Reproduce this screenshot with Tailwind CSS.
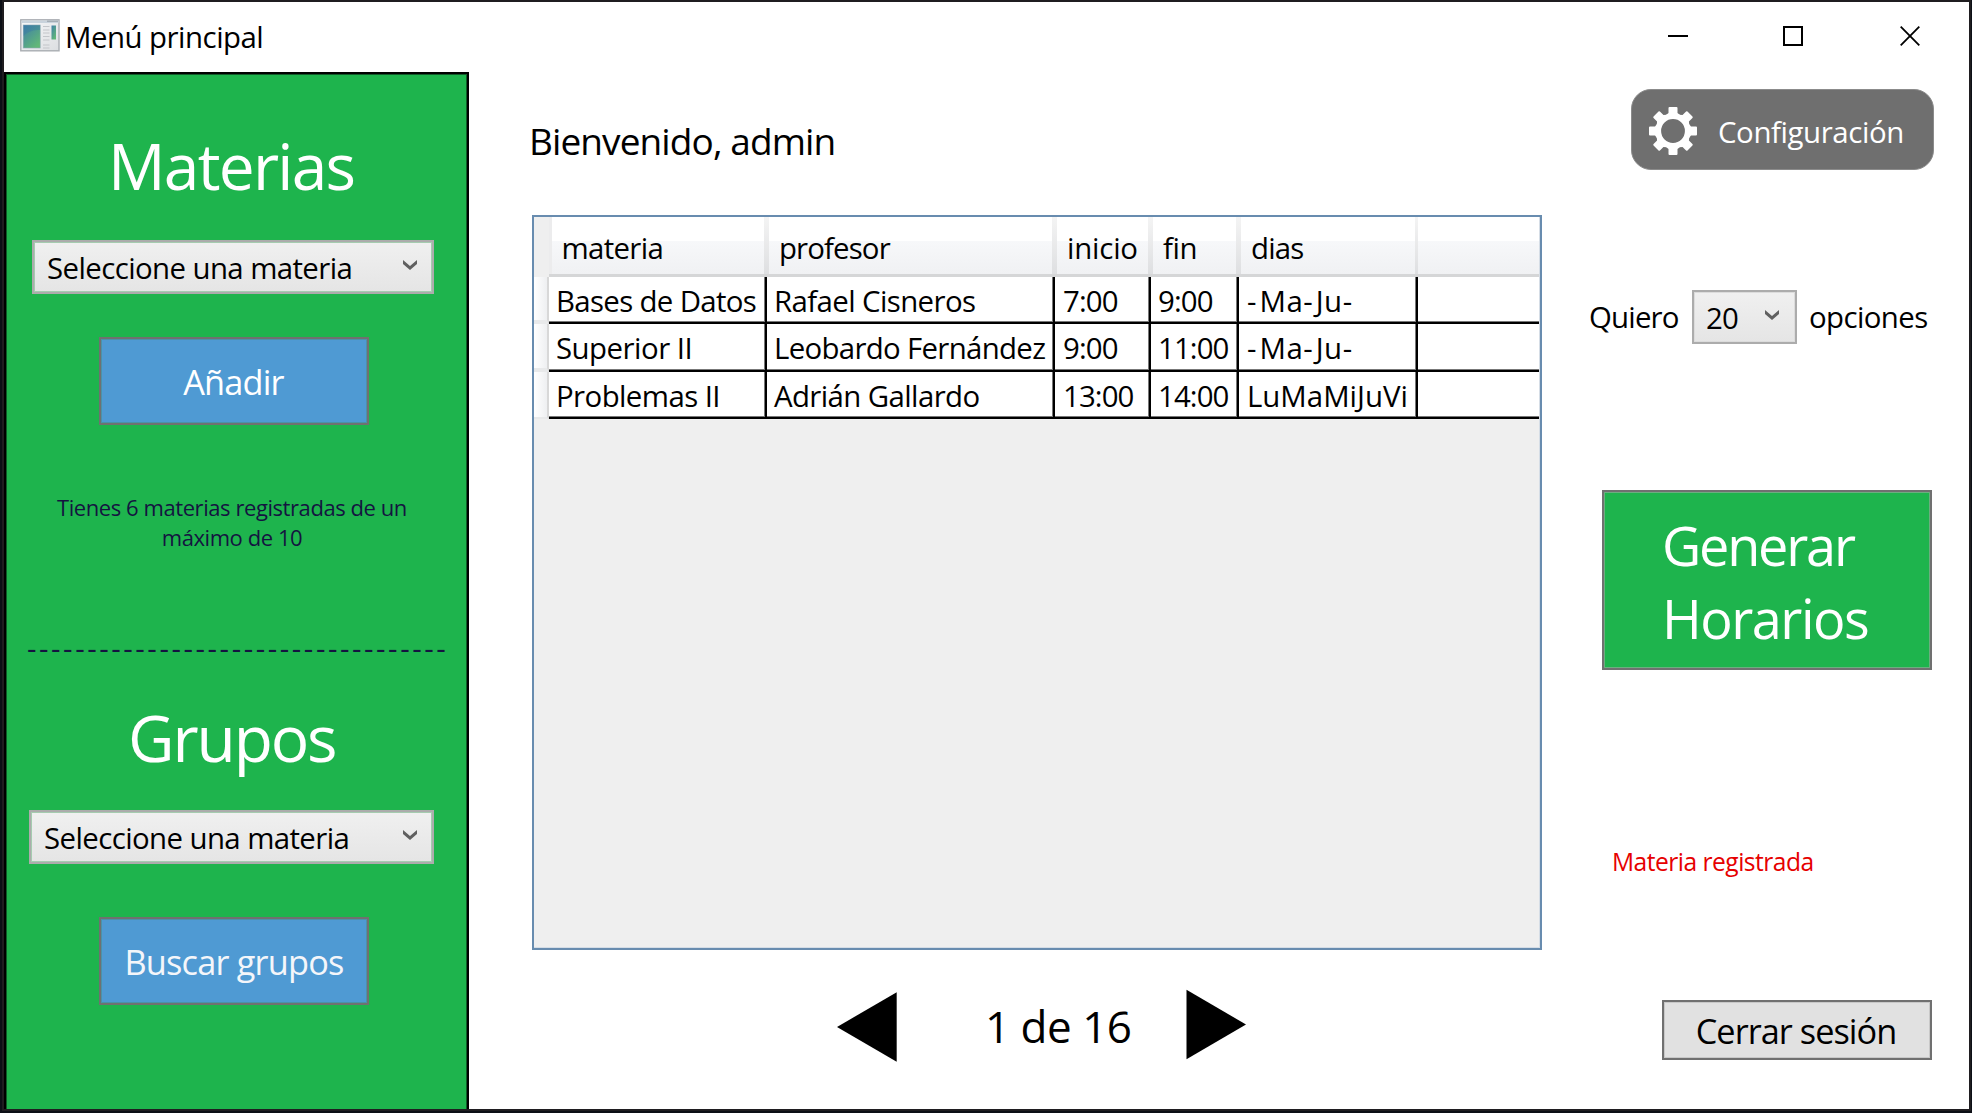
<!DOCTYPE html>
<html lang="es">
<head>
<meta charset="utf-8">
<title>Menú principal</title>
<script src="https://cdn.jsdelivr.net/npm/@tailwindcss/browser@4"></script>
</head>
<body class="w-[1972px] h-[1113px] overflow-hidden bg-[#05060f] font-['Open_Sans',sans-serif] text-[29.4px] leading-[40px] text-black whitespace-nowrap">
<div class="w-[1972px] h-[1113px] bg-[#0c0f16] pl-[2px] pr-px pb-[2px]">
<div class="w-full h-full bg-white border-2 border-[#1f1d20] flex flex-col">

  <!-- Title bar -->
  <header class="h-[70px] flex-none flex items-start">
    <svg class="ml-4 mt-[17px] flex-none" width="40" height="33" viewBox="0 0 40 33">
      <defs>
        <linearGradient id="pane" x1="0" y1="0" x2="0.7" y2="1"><stop offset="0" stop-color="#3f7fa8"/><stop offset="1" stop-color="#62b877"/></linearGradient>
        <linearGradient id="frame" x1="0" y1="0" x2="1" y2="1"><stop offset="0" stop-color="#f7f8f9"/><stop offset="1" stop-color="#dcdee1"/></linearGradient>
      </defs>
      <rect x="0.8" y="0.8" width="38.2" height="31" fill="url(#frame)" stroke="#a9adb2" stroke-width="1.4"/>
      <rect x="1.5" y="1.5" width="37" height="2.5" fill="#c9d3dc"/>
      <rect x="27" y="1.5" width="11" height="1.5" fill="#a4adb5"/>
      <rect x="3.2" y="6" width="17" height="23" fill="url(#pane)" stroke="#8fa9b5" stroke-width=".6"/>
      <path d="M3.5 17c5-5 10-6 16.500-6V6.300H3.500z" fill="#3673a8" opacity=".35"/>
      <path d="M23 7.500h6.500M23 11h6.500M23 14h6.500M23 17.500h6.500M23 21h6.500M23 26h6.500M23 29h6.500" stroke="#c3c6ca" stroke-width="1.200"/>
      <rect x="31.500" y="6.500" width="4.500" height="14" fill="url(#pane)"/>
    </svg>
    <h1 class="ml-[5px] mt-[15px] tracking-[-0.5px]">Menú principal</h1>
    <div class="ml-auto mr-[49px] mt-6 flex">
      <svg width="20" height="20" viewBox="0 0 20 20" class="mr-[95px]"><path d="M0 10h20" stroke="#000" stroke-width="2"/></svg>
      <svg width="20" height="20" viewBox="0 0 20 20" class="mr-[97px]"><path d="M1 1h18v18H1z" fill="none" stroke="#000" stroke-width="2"/></svg>
      <svg width="20" height="20" viewBox="0 0 20 20"><path d="M.7.700 19.300 19.300M19.300.700.700 19.300" stroke="#000" stroke-width="1.800"/></svg>
    </div>
  </header>

  <div class="flex-1 flex min-h-0">

    <!-- Sidebar -->
    <aside class="w-[465px] h-[1037px] flex-none bg-[#1eb44d] border-2 border-b-0 border-black shadow-[inset_0_1px_0_#0f5c28,inset_1px_0_0_#0f5c28,inset_-1px_0_0_#0f5c28] flex flex-col items-start">
      <h2 class="mt-[52px] pl-[102px] text-[64px] leading-[80px] tracking-[-1.75px] text-white">Materias</h2>
      <div class="mt-[34px] ml-[26px] w-[402px] h-[54px] flex-none border-2 border-[#acacac] bg-linear-to-b from-[#f0f0f0] to-[#e5e5e5] shadow-[inset_0_0_0_1px_#a5ccb0] flex items-center pl-[13px] pr-[15px] justify-between">
        <span class="pt-px tracking-[-0.59px]">Seleccione una materia</span>
        <svg width="14" height="10" viewBox="0 0 14 10" class="-mt-1"><path d="M0 0 7 6 14 0V4L7 10 0 4z" fill="#606060"/></svg>
      </div>
      <button class="mt-[43px] ml-[93px] w-[270px] h-[88px] flex-none border-2 border-[#707070] bg-[#4f9ad3] shadow-[inset_0_0_0_1px_#4a92a8] pt-px pr-px text-[34.3px] tracking-[-0.8px] text-white">Añadir</button>
      <p class="mt-[67px] w-[452px] text-center text-[22px] leading-[30px] tracking-[-0.43px] text-[#141440]">Tienes 6 materias registradas de un<br>máximo de 10</p>
      <div class="mt-[76px] pl-[21px] tracking-[2.58px] text-[#141440]">-----------------------------------</div>
      <h2 class="mt-[30px] pl-[122px] text-[64px] leading-[80px] tracking-[-2.1px] text-white">Grupos</h2>
      <div class="mt-[32px] ml-[23px] w-[405px] h-[54px] flex-none border-2 border-[#acacac] bg-linear-to-b from-[#f0f0f0] to-[#e5e5e5] shadow-[inset_0_0_0_1px_#a5ccb0] flex items-center pl-[13px] pr-[15px] justify-between">
        <span class="pt-px tracking-[-0.59px]">Seleccione una materia</span>
        <svg width="14" height="10" viewBox="0 0 14 10" class="-mt-1"><path d="M0 0 7 6 14 0V4L7 10 0 4z" fill="#606060"/></svg>
      </div>
      <button class="mt-[53px] ml-[93px] w-[270px] h-[88px] flex-none border-2 border-[#707070] bg-[#4f9ad3] shadow-[inset_0_0_0_1px_#4a92a8] pt-[2px] text-[34.3px] tracking-[-0.8px] text-[#f4f6fa]">Buscar grupos</button>
    </aside>

    <!-- Schedule -->
    <main class="w-[1073px] flex-none flex flex-col">
      <p class="mt-[44px] ml-[60px] text-[37px] leading-[50px] tracking-[-0.9px]">Bienvenido, admin</p>
      <div class="mt-[49px] ml-[63px] w-[1010px] h-[735px] flex-none border-2 border-[#688caf] bg-[#efefef] shadow-[inset_-1px_-1px_0_#d5dde6]">
        <div class="w-[1005px]">
          <div class="grid grid-rows-[100%] grid-cols-[15px_218px_288px_96px_88px_179px_121px] h-[60px] leading-[62px]">
            <div class="bg-[#efefef]"></div>
            <div class="border-b-[3px] border-[#d5d6d7] bg-[linear-gradient(#fff_0,#fff_24px,#f7f8fa_24px,#f0f1f3_100%)] shadow-[inset_3px_0_0_#ececed] pl-[12.5px] tracking-[-0.67px]">materia</div>
            <div class="border-b-[3px] border-[#d5d6d7] bg-[linear-gradient(#fff_0,#fff_24px,#f7f8fa_24px,#f0f1f3_100%)] flex"><i class="-ml-[3px] mr-[10px] w-[5px] bg-linear-to-b from-[#f4f4f4] to-[#dedfe1]"></i><span class="tracking-[-0.87px]">profesor</span></div>
            <div class="border-b-[3px] border-[#d5d6d7] bg-[linear-gradient(#fff_0,#fff_24px,#f7f8fa_24px,#f0f1f3_100%)] flex"><i class="-ml-[3px] mr-[10px] w-[5px] bg-linear-to-b from-[#f4f4f4] to-[#dedfe1]"></i><span class="tracking-[-0.2px]">inicio</span></div>
            <div class="border-b-[3px] border-[#d5d6d7] bg-[linear-gradient(#fff_0,#fff_24px,#f7f8fa_24px,#f0f1f3_100%)] flex"><i class="-ml-[3px] mr-[10px] w-[5px] bg-linear-to-b from-[#f4f4f4] to-[#dedfe1]"></i><span class="tracking-[-0.45px]">fin</span></div>
            <div class="border-b-[3px] border-[#d5d6d7] bg-[linear-gradient(#fff_0,#fff_24px,#f7f8fa_24px,#f0f1f3_100%)] flex"><i class="-ml-[3px] mr-[10px] w-[5px] bg-linear-to-b from-[#f4f4f4] to-[#dedfe1]"></i><span class="tracking-[-0.8px]">dias</span></div>
            <div class="border-b-[3px] border-[#d5d6d7] bg-[linear-gradient(#fff_0,#fff_24px,#f7f8fa_24px,#f0f1f3_100%)] flex"><i class="-ml-[3px] w-[3px] bg-linear-to-b from-[#f4f4f4] to-[#dedfe1]"></i></div>
          </div>

          <div class="grid grid-rows-[100%] grid-cols-[15px_218px_288px_96px_88px_179px_121px] h-[47px] leading-[49px] *:border-black *:bg-white *:pl-[7px] *:border-r-2 *:border-b-2 *:shadow-[inset_-1px_-1px_0_#777]">
            <div class="border-[#d8d8d8]! border-b-[#e8e9ea]! border-b-4! bg-linear-to-r from-white to-[#eeeff1] shadow-none!"></div>
            <div class="tracking-[-0.66px]">Bases de Datos</div>
            <div class="tracking-[-0.6px]">Rafael Cisneros</div>
            <div class="pl-2! tracking-[-0.9px]">7:00</div>
            <div class="tracking-[-0.9px]">9:00</div>
            <div class="pl-2! tracking-[0.5px]"><span class="tracking-[3px]">-</span>Ma<span class="tracking-[3px]">-</span>Ju-</div>
            <div class="border-r-0! shadow-[inset_0_-1px_0_#777]!"></div>
          </div>
          <div class="grid grid-rows-[100%] grid-cols-[15px_218px_288px_96px_88px_179px_121px] h-[48px] leading-[49px] *:border-black *:bg-white *:pl-[7px] *:border-r-2 *:border-b-2 *:shadow-[inset_-1px_-1px_0_#777]">
            <div class="border-[#d8d8d8]! border-b-[#e8e9ea]! border-b-4! bg-linear-to-r from-white to-[#eeeff1] shadow-none!"></div>
            <div class="tracking-[-0.51px]">Superior II</div>
            <div class="tracking-[-0.68px]">Leobardo Fernández</div>
            <div class="pl-2! tracking-[-0.9px]">9:00</div>
            <div class="tracking-[-0.9px]">11:00</div>
            <div class="pl-2! tracking-[0.5px]"><span class="tracking-[3px]">-</span>Ma<span class="tracking-[3px]">-</span>Ju-</div>
            <div class="border-r-0! shadow-[inset_0_-1px_0_#777]!"></div>
          </div>
          <div class="grid grid-rows-[100%] grid-cols-[15px_218px_288px_96px_88px_179px_121px] h-[47px] leading-[49px] *:border-black *:bg-white *:pl-[7px] *:border-r-2 *:border-b-2 *:shadow-[inset_-1px_-1px_0_#777]">
            <div class="border-[#d8d8d8]! border-b-[#e8e9ea]! border-b-2! bg-linear-to-r from-white to-[#eeeff1] shadow-none!"></div>
            <div class="tracking-[-0.58px]">Problemas II</div>
            <div class="tracking-[-0.6px]">Adrián Gallardo</div>
            <div class="pl-2! tracking-[-0.9px]">13:00</div>
            <div class="tracking-[-0.9px]">14:00</div>
            <div class="pl-2! tracking-[0px]">LuMaMiJuVi</div>
            <div class="border-r-0! shadow-[inset_0_-1px_0_#777]!"></div>
          </div>
        </div>
      </div>

      <!-- Pager -->
      <div class="flex items-start pl-[368px]">
        <svg class="mt-[42px] flex-none" width="60" height="71" viewBox="0 0 60 71"><path d="M0 35 59.700.200V69.800z"/></svg>
        <span class="ml-[88px] mt-[46px] w-[201px] flex-none text-[44px] leading-[60px] tracking-[-0.5px]">1 de 16</span>
        <svg class="mt-[39px] flex-none" width="60" height="71" viewBox="0 0 60 71"><path d="M60 35.500.500.700V70.200z"/></svg>
      </div>
    </main>

    <!-- Actions -->
    <section class="flex-1 flex flex-col items-start">
      <button class="mt-[17px] ml-[89px] w-[303px] h-[81px] flex-none rounded-[20px] bg-[#6f6f6f] border border-[#8b8b8b] flex items-center text-white">
        <svg class="ml-[17px] mt-[3px] flex-none" width="48" height="48" viewBox="-24 -24 48 48" fill="#fff">
          <circle r="14.700" fill="none" stroke="#fff" stroke-width="5.600"/>
          <g id="teeth"><path d="M-7-16-4.500-18V-23Q-4.500-24-3.500-24H3.500Q4.500-24 4.500-23V-18L7-16 4-13H-4zM-7 16-4.500 18V23Q-4.500 24-3.500 24H3.500Q4.500 24 4.500 23V18L7 16 4 13H-4z"/></g>
          <use href="#teeth" transform="rotate(45)"/><use href="#teeth" transform="rotate(90)"/><use href="#teeth" transform="rotate(135)"/>
        </svg>
        <span class="ml-[21px] pt-[4px] tracking-[-0.4px]">Configuración</span>
      </button>

      <div class="mt-[120px] ml-[47px] flex items-start">
        <span class="mt-[7px] w-[103px] tracking-[-0.8px]">Quiero</span>
        <div class="w-[105px] h-[54px] border-2 border-[#acacac] bg-linear-to-b from-[#f0f0f0] to-[#e5e5e5] shadow-[inset_0_0_0_1px_#dcdcdc] flex items-center justify-between pl-[12px] pr-4">
          <span class="pt-[2px] tracking-[-0.8px]">20</span>
          <svg width="14" height="10" viewBox="0 0 14 10" class="-mt-1"><path d="M0 0 7 6 14 0V4L7 10 0 4z" fill="#606060"/></svg>
        </div>
        <span class="mt-[7px] ml-3 tracking-[-0.6px]">opciones</span>
      </div>

      <button class="mt-[146px] ml-[60px] w-[330px] h-[180px] flex-none border-2 border-[#707070] bg-[#1eb44d] shadow-[inset_0_0_0_1px_#6cae80] pl-[58px] pt-[3px] text-left text-[54px] leading-[73px] text-white"><span class="tracking-[-2.2px]">Generar</span><br><span class="tracking-[-1.5px]">Horarios</span></button>

      <p class="mt-[172px] ml-[70px] text-[24.6px] tracking-[-0.52px] text-[#e60000]">Materia registrada</p>

      <button class="mt-[118px] ml-[120px] w-[270px] h-[60px] flex-none border-2 border-[#707070] bg-[#e1e1e1] shadow-[inset_0_0_0_1px_#c8c8c8] pt-[2px] pr-[2px] text-[34.3px] tracking-[-0.97px]">Cerrar sesión</button>
    </section>
  </div>
</div>
</div>
</body>
</html>
